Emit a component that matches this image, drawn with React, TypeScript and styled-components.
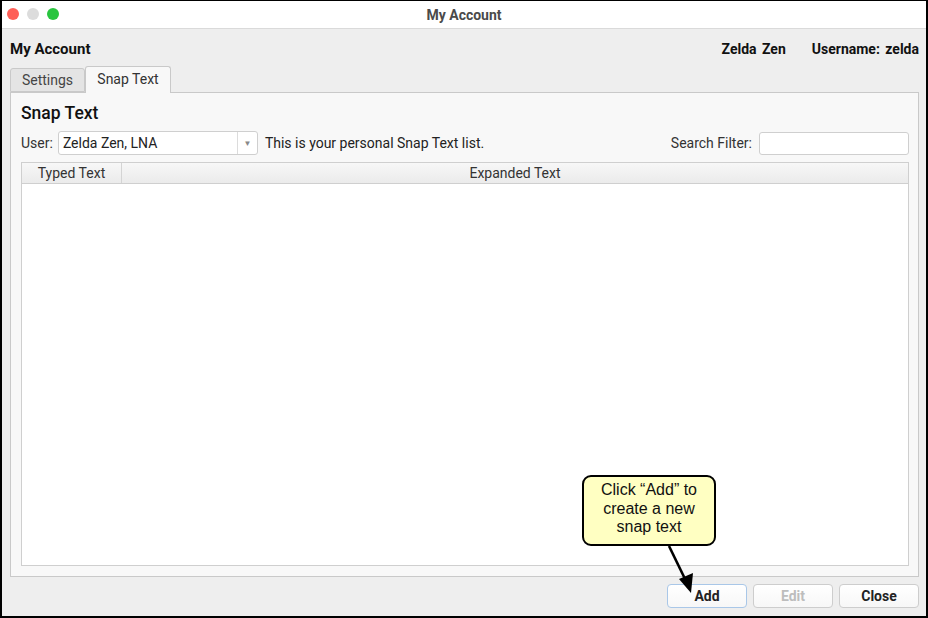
import React from 'react'
import styled, { createGlobalStyle } from 'styled-components'

const GlobalStyle = createGlobalStyle`
  html, body {
    margin: 0;
    padding: 0;
    background: #ffffff;
  }
  * {
    box-sizing: border-box;
  }
`

const Window = styled.div`
  position: relative;
  width: 928px;
  height: 618px;
  display: flex;
  flex-direction: column;
  border: 2px solid #000;
  border-top-width: 1px;
  font-family: Roboto, 'Liberation Sans', sans-serif;
  font-size: 14px;
  color: #222;
  overflow: hidden;
`

const TitleBar = styled.div`
  position: relative;
  height: 28px;
  flex: none;
  display: flex;
  align-items: center;
  justify-content: center;
  background: #fff;
  border-bottom: 1px solid #dadada;
`

const Lights = styled.div`
  position: absolute;
  left: 5px;
  top: 7px;
  display: flex;
  gap: 8px;
`

const Light = styled.span<{ $color: string }>`
  width: 12px;
  height: 12px;
  border-radius: 50%;
  background: ${(p) => p.$color};
`

const WindowTitle = styled.div`
  font-weight: 700;
  font-size: 14px;
  color: #4a4a4a;
`

const Body = styled.div`
  flex: 1;
  display: flex;
  flex-direction: column;
  background: #eeeeee;
  padding: 0 7px 0 8px;
`

const AccountRow = styled.div`
  margin-top: 10px;
  height: 20px;
  display: flex;
  align-items: center;
  font-weight: 700;
  font-size: 15px;
  color: #111;
`

const AccountTitle = styled.div`
  flex: 1;
`

const AccountInfo = styled.div`
  display: flex;
  gap: 26px;
  font-size: 14px;
  word-spacing: 2px;
`

const TabBar = styled.div`
  margin-top: 7px;
  height: 26px;
  display: flex;
  align-items: flex-end;
  position: relative;
  z-index: 1;
`

const Tab = styled.div<{ $active?: boolean }>`
  width: ${(p) => (p.$active ? '86px' : '75px')};
  height: ${(p) => (p.$active ? '27px' : '24px')};
  margin-bottom: ${(p) => (p.$active ? '-1px' : '0')};
  padding-bottom: ${(p) => (p.$active ? '3px' : '0')};
  display: flex;
  align-items: center;
  justify-content: center;
  border: 1px solid #c9c9c9;
  border-bottom: ${(p) => (p.$active ? 'none' : '1px solid #c9c9c9')};
  border-radius: 3px 3px 0 0;
  background: ${(p) => (p.$active ? '#f8f8f8' : '#e4e4e4')};
  color: ${(p) => (p.$active ? '#333' : '#444')};
`

const Panel = styled.div`
  height: 485px;
  display: flex;
  flex-direction: column;
  background: #f8f8f8;
  border: 1px solid #c9c9c9;
  padding: 9px 9px 10px 10px;
`

const Heading = styled.div`
  height: 22px;
  display: flex;
  align-items: center;
  font-size: 17.5px;
  font-weight: 500;
  color: #111;
`

const UserRow = styled.div`
  margin-top: 7px;
  height: 24px;
  display: flex;
  align-items: center;
`

const Label = styled.span<{ $gap?: number }>`
  margin-right: ${(p) => p.$gap ?? 6}px;
  color: #333;
`

const Combo = styled.div`
  width: 200px;
  height: 24px;
  display: flex;
  background: #fff;
  border: 1px solid #cfcfcf;
  border-radius: 3px;
  margin-right: 7px;
`

const ComboValue = styled.div`
  flex: 1;
  display: flex;
  align-items: center;
  padding-left: 4px;
  color: #222;
`

const ComboButton = styled.div`
  width: 20px;
  display: flex;
  align-items: center;
  justify-content: center;
  border-left: 1px solid #dcdcdc;
  color: #888;
  font-size: 8px;
`

const Note = styled.span`
  flex: 1;
  color: #222;
`

const SearchBox = styled.div`
  width: 150px;
  height: 23px;
  background: #fff;
  border: 1px solid #cfcfcf;
  border-radius: 3px;
`

const Table = styled.div`
  margin-top: 7px;
  flex: 1;
  display: flex;
  flex-direction: column;
  background: #fff;
  border: 1px solid #cfcfcf;
`

const TableHead = styled.div`
  height: 21px;
  display: flex;
  background: linear-gradient(#f7f7f7, #ebebeb);
  border-bottom: 1px solid #cfcfcf;
`

const HeadCell = styled.div<{ $width?: number }>`
  ${(p) => (p.$width ? `width: ${p.$width}px;` : 'flex: 1;')}
  display: flex;
  align-items: center;
  justify-content: center;
  color: #333;
  border-right: ${(p) => (p.$width ? '1px solid #d4d4d4' : 'none')};
`

const Footer = styled.div`
  margin-top: 7px;
  display: flex;
  justify-content: flex-end;
  gap: 6px;
`

const Button = styled.div<{ $focused?: boolean; $disabled?: boolean }>`
  width: 80px;
  height: 24px;
  display: flex;
  align-items: center;
  justify-content: center;
  font-weight: 700;
  font-size: 14px;
  border-radius: 4px;
  background: linear-gradient(#ffffff, #f7f7f7);
  border: 1px solid ${(p) => (p.$focused ? '#a9c7e8' : '#cdcdcd')};
  color: ${(p) => (p.$disabled ? '#bdbdbd' : '#222')};
`

const Callout = styled.div`
  position: absolute;
  left: 580px;
  top: 474px;
  width: 134px;
  height: 71px;
  display: flex;
  align-items: center;
  justify-content: center;
  text-align: center;
  padding-bottom: 3px;
  background: #ffffc2;
  border: 2px solid #000;
  border-radius: 9px;
  font-family: 'Liberation Sans', Arial, sans-serif;
  font-size: 16px;
  line-height: 18.5px;
  color: #111;
`

const Arrow = styled.svg`
  position: absolute;
  left: 655px;
  top: 540px;
`

export default function App() {
  return (
    <>
      <GlobalStyle />
      <Window>
        <TitleBar>
          <Lights>
            <Light $color="#fe5f57" />
            <Light $color="#dcdcdc" />
            <Light $color="#29c53f" />
          </Lights>
          <WindowTitle>My Account</WindowTitle>
        </TitleBar>
        <Body>
          <AccountRow>
            <AccountTitle>My Account</AccountTitle>
            <AccountInfo>
              <span>Zelda Zen</span>
              <span>Username: zelda</span>
            </AccountInfo>
          </AccountRow>
          <TabBar>
            <Tab>Settings</Tab>
            <Tab $active>Snap Text</Tab>
          </TabBar>
          <Panel>
            <Heading>Snap Text</Heading>
            <UserRow>
              <Label $gap={5}>User:</Label>
              <Combo>
                <ComboValue>Zelda Zen, LNA</ComboValue>
                <ComboButton>▼</ComboButton>
              </Combo>
              <Note>This is your personal Snap Text list.</Note>
              <Label $gap={7}>Search Filter:</Label>
              <SearchBox />
            </UserRow>
            <Table>
              <TableHead>
                <HeadCell $width={100}>Typed Text</HeadCell>
                <HeadCell>Expanded Text</HeadCell>
              </TableHead>
            </Table>
          </Panel>
          <Footer>
            <Button $focused>Add</Button>
            <Button $disabled>Edit</Button>
            <Button>Close</Button>
          </Footer>
        </Body>
        <Callout>
          Click “Add” to
          <br />
          create a new
          <br />
          snap text
        </Callout>
        <Arrow width="45" height="60" viewBox="0 0 45 60">
          <line x1="12" y1="5" x2="29" y2="40" stroke="#000" strokeWidth="2.6" />
          <polygon points="22,38 36,32 34,52" fill="#000" />
        </Arrow>
      </Window>
    </>
  )
}
